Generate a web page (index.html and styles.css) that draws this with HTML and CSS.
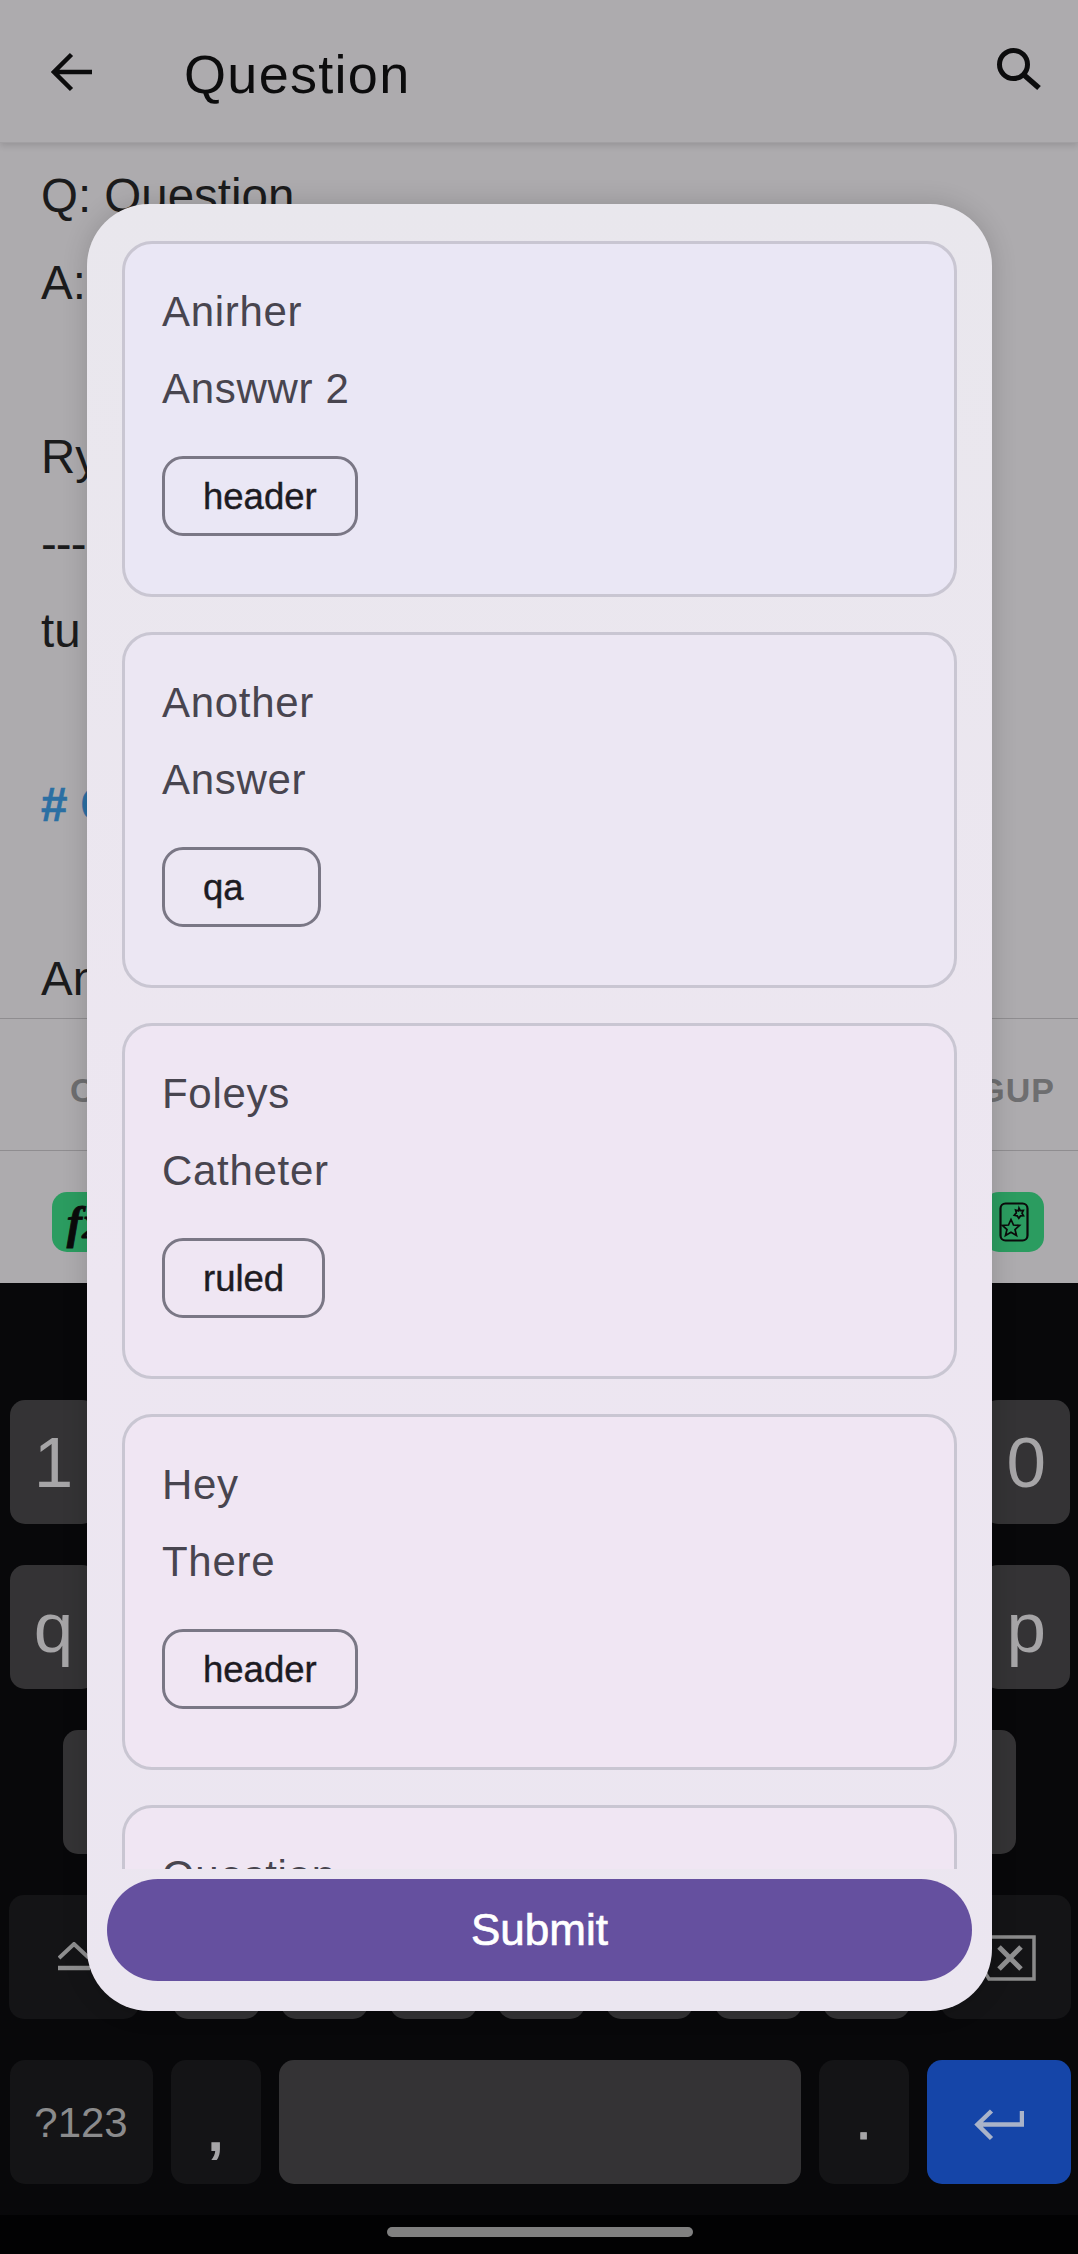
FILE: index.html
```html
<!DOCTYPE html>
<html lang="en">
<head>
<meta charset="utf-8">
<title>Question</title>
<link rel="stylesheet" href="styles.css">
</head>
<body>
<div class="screen">
  <header class="appbar">
    <svg class="back" viewBox="0 0 42 40" width="42" height="40"><path d="M41 20H3M20.500 2.500 3 20l17.500 17.500" fill="none" stroke="#0c0c0d" stroke-width="4.500"/></svg>
    <h1 class="title">Question</h1>
    <svg class="search" viewBox="0 0 44 44" width="44" height="44"><circle cx="16.500" cy="16.500" r="14" fill="none" stroke="#0c0c0d" stroke-width="5"/><path d="M26.500 26.500 42 40" fill="none" stroke="#0c0c0d" stroke-width="5.500"/></svg>
  </header>
  <main class="note">
    <p class="line">Q: Question</p>
    <p class="line">A:</p>
    <p class="line gap">Ry</p>
    <p class="line line-rule">---</p>
    <p class="line">tu</p>
    <p class="line gap heading"># C</p>
    <p class="line gap">An</p>
  </main>
  <div class="tabs">
    <span class="tab">C</span>
    <span class="tab">GUP</span>
  </div>
  <div class="tools">
    <span class="tool tool-fx">fx</span>
    <span class="tool">
      <svg viewBox="0 0 30 40" width="30" height="40"><rect x="1.500" y="1.500" width="27" height="37" rx="5" fill="none" stroke="#0b0b0b" stroke-width="2.200"/><path d="m12 17.500 2.500 5.500 6 .5-4.500 4 1.500 6-5.500-3.200-5.500 3.200 1.500-6-4.500-4 6-.5zM20 6l1.300 2.700 3-.2-1.300 2.700 1.500 2.500-3 .2-1.700 2.400-1.600-2.500-2.900-.6 2-2.300-.7-2.900 2.800.9z" fill="none" stroke="#0b0b0b" stroke-width="1.700"/></svg>
    </span>
  </div>
  <section class="keyboard">
    <div class="row">
      <span class="key">1</span><span class="key"></span><span class="key"></span><span class="key"></span><span class="key"></span><span class="key"></span><span class="key"></span><span class="key"></span><span class="key"></span><span class="key">0</span>
    </div>
    <div class="row">
      <span class="key">q</span><span class="key"></span><span class="key"></span><span class="key"></span><span class="key"></span><span class="key"></span><span class="key"></span><span class="key"></span><span class="key"></span><span class="key">p</span>
    </div>
    <div class="row row-home">
      <span class="key"></span><span class="key"></span><span class="key"></span><span class="key"></span><span class="key"></span><span class="key"></span><span class="key"></span><span class="key"></span><span class="key"></span>
    </div>
    <div class="row row-shift">
      <span class="key key-fn key-wide">
        <svg viewBox="0 0 32 30" width="32" height="30"><path d="M1 16 16 2l15 14" fill="none" stroke="#8e8e8f" stroke-width="4"/><path d="M0 26h32" stroke="#8e8e8f" stroke-width="4.500"/></svg>
      </span>
      <span class="letters"><span class="key"></span><span class="key"></span><span class="key"></span><span class="key"></span><span class="key"></span><span class="key"></span><span class="key"></span></span>
      <span class="key key-fn key-wide key-delete">
        <svg viewBox="0 0 62 46" width="62" height="46"><path d="M15 2h45v42H15L2 23z" fill="none" stroke="#8a8a8b" stroke-width="3.500"/><path d="m25 12 22 22M47 12 25 34" fill="none" stroke="#8f8f90" stroke-width="5"/></svg>
      </span>
    </div>
    <div class="row row-bottom">
      <span class="key key-fn key-sym">?123</span>
      <span class="key key-fn key-punct key-comma">,</span>
      <span class="key key-space"></span>
      <span class="key key-fn key-punct key-period">.</span>
      <span class="key key-enter">
        <svg viewBox="0 0 50 32" width="50" height="32"><path d="M48 2v13.500H4M17.500 2 3.500 15.500l14 14" fill="none" stroke="#a9b3c9" stroke-width="4.500"/></svg>
      </span>
    </div>
  </section>
  <div class="navbar"><span class="pill"></span></div>

  <div class="modal">
    <div class="list">
      <article class="card">
        <p class="card-text">Anirher</p>
        <p class="card-text">Answwr 2</p>
        <span class="chip">header</span>
      </article>
      <article class="card">
        <p class="card-text">Another</p>
        <p class="card-text">Answer</p>
        <span class="chip">qa</span>
      </article>
      <article class="card">
        <p class="card-text">Foleys</p>
        <p class="card-text">Catheter</p>
        <span class="chip">ruled</span>
      </article>
      <article class="card">
        <p class="card-text">Hey</p>
        <p class="card-text">There</p>
        <span class="chip">header</span>
      </article>
      <article class="card">
        <p class="card-text">Question</p>
      </article>
    </div>
    <button class="submit" type="button">Submit</button>
  </div>
</div>
</body>
</html>
```
FILE: styles.css
```css
* { box-sizing: border-box; }

html, body {
  margin: 0;
  padding: 0;
  background: #020203;
}

.screen {
  position: relative;
  display: flex;
  flex-direction: column;
  width: 1078px;
  height: 2254px;
  overflow: hidden;
  background: #adabae;
  font-family: "Liberation Sans", Arial, sans-serif;
}

.appbar {
  display: flex;
  flex: 0 0 143px;
  align-items: flex-start;
  position: relative;
  box-shadow: 0 3px 6px rgba(0, 0, 0, 0.12);
  border-bottom: 1px solid #a2a0a3;
}

.back {
  flex: none;
  margin: 52px 0 0 51px;
}

.title {
  flex: 1;
  margin: 41px 0 0 91px;
  font-size: 54px;
  line-height: 66px;
  font-weight: 400;
  letter-spacing: 1.300px;
  color: #0c0c0d;
}

.search {
  flex: none;
  margin: 48px 37px 0 0;
}

.note {
  flex: 0 0 876px;
  padding: 9px 0 0 41px;
  overflow: hidden;
  border-bottom: 1px solid #8f8d90;
}

.line {
  margin: 0;
  font-size: 47.500px;
  line-height: 87px;
  color: #1b1b1c;
}

.line-rule { letter-spacing: -1px; }

.gap { margin-top: 87px; }

.heading {
  font-weight: 700;
  -webkit-text-stroke: 0.600px #2b6fa3;
  color: #2b6fa3;
}

.tabs {
  display: flex;
  flex: 0 0 132px;
  align-items: center;
  justify-content: space-between;
  padding: 12px 23px 0 70px;
  border-bottom: 1px solid #8f8d90;
}

.tab {
  font-size: 34px;
  font-weight: 700;
  letter-spacing: 1px;
  color: #6e6e70;
}

.tools {
  display: flex;
  flex: 0 0 132px;
  align-items: center;
  justify-content: space-between;
  padding: 10px 34px 0 52px;
}

.tool {
  display: flex;
  align-items: center;
  justify-content: center;
  width: 60px;
  height: 60px;
  border-radius: 15px;
  background: #2b9c60;
}

.tool-fx {
  padding-left: 8px;
  font-family: "Liberation Serif", serif;
  font-size: 46px;
  font-weight: 700;
  font-style: italic;
  -webkit-text-stroke: 0.800px #0b0b0b;
  color: #0b0b0b;
}

.keyboard {
  display: flex;
  flex: 0 0 932px;
  flex-direction: column;
  gap: 41px;
  padding-top: 117px;
  background: #08080a;
}

.row {
  display: grid;
  grid-template-columns: repeat(10, 87px);
  gap: 21.100px;
  height: 124px;
  padding-left: 10px;
}

.row-home {
  grid-template-columns: repeat(9, 87px);
  gap: 21.300px;
  padding-left: 63px;
}

.row-shift {
  display: flex;
  gap: 0;
  justify-content: space-between;
  padding: 0 7px 0 9px;
}

.letters {
  display: flex;
  gap: 21.300px;
  margin-left: 3px;
}

.letters .key { width: 87px; }

.row-bottom {
  display: flex;
  gap: 18px;
  padding-left: 9.500px;
}

.key {
  display: flex;
  align-items: center;
  justify-content: center;
  border-radius: 15px;
  background: #343335;
  font-size: 71px;
  color: #a6a5a7;
}

.key-fn { background: #141416; }

.key-wide { width: 130px; }

.key-delete {
  padding-top: 2px;
  justify-content: flex-end;
  padding-right: 35px;
}

.key-sym {
  width: 143px;
  padding-top: 2px;
  font-size: 42px;
  color: #8b8b8c;
}

.key-punct {
  width: 90px;
  font-size: 60px;
}

.key-period {
  padding-bottom: 7px;
  -webkit-text-stroke: 0.800px #a6a5a7;
}

.key-comma {
  padding-top: 16px;
  font-weight: 700;
}

.key-space {
  width: 522px;
  border-radius: 15px;
}

.key-enter {
  width: 144px;
  padding-top: 6px;
  background: #1545a8;
}

.navbar {
  display: flex;
  flex: 1;
  align-items: flex-start;
  justify-content: center;
  padding: 12px 0 0 2px;
  background: #020203;
}

.pill {
  width: 306px;
  height: 10px;
  border-radius: 5px;
  background: #808080;
}

.modal {
  position: absolute;
  top: 204px;
  left: 87px;
  display: flex;
  flex-direction: column;
  width: 905px;
  height: 1807px;
  padding: 0 20px 30px;
  border-radius: 62px;
  background: linear-gradient(180deg, #e9e7ed 0%, #ede6f1 60%, #ebe6f0 100%);
  box-shadow: 0 0 26px rgba(0, 0, 0, 0.16);
}

.list {
  display: flex;
  flex: 0 0 1665px;
  flex-direction: column;
  gap: 35px;
  margin: 0 -20px;
  padding: 37px 35px 0;
  overflow: hidden;
}

.card {
  display: flex;
  flex: none;
  flex-direction: column;
  align-items: flex-start;
  height: 356px;
  padding: 29px 37px 0;
  border: 3px solid #c9c6d2;
  border-radius: 30px;
}

.card:nth-child(1) { background: #eae7f5; }
.card:nth-child(2) { background: #ece7f3; }
.card:nth-child(3) { background: #efe6f3; }
.card:nth-child(4) { background: #f0e6f3; }
.card:nth-child(5) { background: #f0e6f3; }

.card-text {
  margin: 0;
  font-size: 42px;
  line-height: 77px;
  letter-spacing: 0.700px;
  color: #48454f;
}

.chip {
  display: flex;
  align-items: center;
  min-width: 159px;
  height: 80px;
  margin-top: 29px;
  padding: 2px 38px 0;
  border: 3px solid #7a7785;
  border-radius: 21px;
  font-size: 36.500px;
  -webkit-text-stroke: 0.400px #1d1b22;
  color: #1d1b22;
}

.submit {
  flex: none;
  height: 102px;
  margin-top: 10px;
  padding: 0;
  border: 0;
  border-radius: 51px;
  background: #65509f;
  font-family: inherit;
  font-size: 44px;
  -webkit-text-stroke: 0.700px #fff;
  color: #fff;
}
```
